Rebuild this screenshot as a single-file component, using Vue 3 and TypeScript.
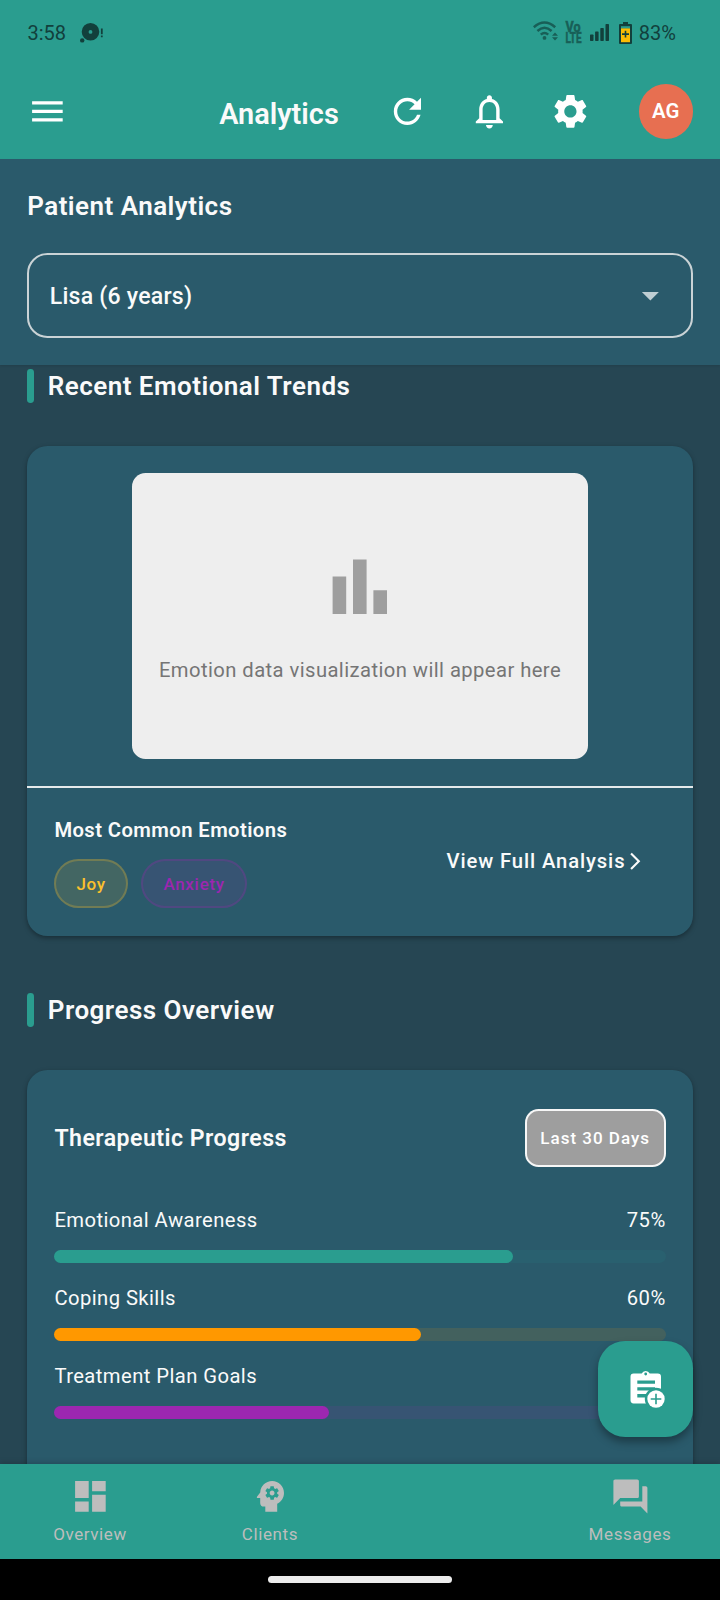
<script setup lang="ts">
interface Metric {
  label: string
  value: number
  shown: boolean
  tone: string
}

interface NavItem {
  label: string
  path: string
}

const metrics: Metric[] = [
  { label: 'Emotional Awareness', value: 75, shown: true, tone: 'teal' },
  { label: 'Coping Skills', value: 60, shown: true, tone: 'orange' },
  { label: 'Treatment Plan Goals', value: 45, shown: false, tone: 'purple' },
]

const navItems: (NavItem | null)[] = [
  {
    label: 'Overview',
    path: 'M3 13h8V3H3v10zm0 8h8v-6H3v6zm10 0h8V11h-8v10zm0-18v6h8V3h-8z',
  },
  {
    label: 'Clients',
    path: 'M13 8.57c-.79 0-1.43.64-1.43 1.43s.64 1.43 1.43 1.43 1.43-.64 1.43-1.43-.64-1.43-1.43-1.43zM13 3C9.25 3 6.2 5.94 6.02 9.64L4.1 12.2c-.25.33-.01.8.4.8H6v3c0 1.1.9 2 2 2h1v3h7v-4.68c2.36-1.12 4-3.53 4-6.32 0-3.87-3.13-7-7-7zm3 7c0 .13-.01.26-.02.39l.83.66c.08.06.1.16.05.25l-.8 1.39c-.05.09-.16.12-.24.09l-.99-.4c-.21.16-.43.29-.67.39L14 13.83c-.01.1-.1.17-.2.17h-1.6c-.1 0-.18-.07-.2-.17l-.15-1.06c-.25-.1-.47-.23-.68-.39l-.99.4c-.09.03-.2 0-.25-.09l-.8-1.39c-.05-.08-.03-.19.05-.25l.84-.66c-.01-.13-.02-.26-.02-.39s.02-.27.04-.39l-.85-.66c-.08-.06-.1-.16-.05-.26l.8-1.38c.05-.09.15-.12.24-.09l1 .4c.2-.15.43-.29.67-.39L12 6.17c.02-.1.1-.17.2-.17h1.6c.1 0 .18.07.2.17l.15 1.06c.24.1.46.23.67.39l1-.4c.09-.03.2 0 .24.09l.8 1.38c.05.09.03.2-.05.26l-.85.66c.03.12.04.25.04.39z',
  },
  null,
  {
    label: 'Messages',
    path: 'M21 6h-2v9H6v2c0 .55.45 1 1 1h11l4 4V7c0-.55-.45-1-1-1zm-4 6V3c0-.55-.45-1-1-1H3c-.55 0-1 .45-1 1v14l4-4h10c.55 0 1-.45 1-1z',
  },
]
</script>

<template>
  <div class="screen">
    <header class="top">
      <div class="status">
        <span class="clock">3:58</span>
        <svg class="chat-status" viewBox="0 0 24 20">
          <path
            fill-rule="evenodd"
            d="M10.5 0a8.8 8.8 0 1 1 0 17.6a8.8 8.8 0 0 1 0-17.6zm0 7a1.9 1.9 0 1 0 0 3.8a1.9 1.9 0 0 0 0-3.8z"
          />
          <circle cx="2.2" cy="17.4" r="2.2" />
          <path d="M20.9 5.4h1.8v5.8h-1.8zM20.9 12.4h1.8v1.8h-1.8z" />
        </svg>
        <svg class="wifi" viewBox="0 0 25 20">
          <g fill="none" stroke="currentColor" stroke-width="2.5">
            <path d="M.8 6.2Q11.5 -3.2 22.2 6.2" />
            <path d="M4.4 10Q11.5 3.6 18.6 10" />
            <path d="M7.8 13.6Q11.5 10.3 15.2 13.6" />
          </g>
          <circle cx="11.5" cy="16.9" r="1.9" />
          <path d="M22 11.5l3 3.3h-6zM22 19.5l3-3.3h-6z" />
        </svg>
        <svg class="volte" viewBox="0 0 17 24">
          <text x="0.5" y="10.8" font-size="13.8" textLength="15" lengthAdjust="spacingAndGlyphs">Vo</text>
          <text x="0.5" y="22" font-size="13.8" textLength="16" lengthAdjust="spacingAndGlyphs">LTE</text>
        </svg>
        <svg class="signal" viewBox="0 0 19 17">
          <rect x="0" y="10.6" width="3.5" height="6.4" rx=".7" />
          <rect x="5.1" y="7.4" width="3.5" height="9.6" rx=".7" />
          <rect x="10.3" y="4" width="3.5" height="13" rx=".7" />
          <rect x="15.5" y="0" width="3.5" height="17" rx=".7" />
        </svg>
        <svg class="battery" viewBox="0 0 13 22">
          <path d="M4 0h5v2h3q1 0 1 1v18q0 1-1 1H1q-1 0-1-1V3q0-1 1-1h3z" />
          <path fill="#2a9d8f" d="M2 4.2h9v2.4H2z" />
          <path fill="#fbbc04" d="M2 6.4h9v13.8H2z" />
          <path d="M5.7 8.8h1.6v2.5H10v1.6H7.3v2.5H5.7v-2.5H3v-1.6h2.7z" />
        </svg>
        <span class="percent">83%</span>
      </div>
      <div class="appbar">
        <svg class="icon menu" viewBox="0 0 24 24"><path d="M3 18h18v-2H3v2zm0-5h18v-2H3v2zm0-7v2h18V6H3z" /></svg>
        <h1>Analytics</h1>
        <svg class="icon" viewBox="0 0 24 24">
          <path
            d="M17.65 6.35C16.2 4.9 14.21 4 12 4c-4.42 0-7.99 3.58-7.99 8s3.57 8 7.99 8c3.73 0 6.84-2.55 7.73-6h-2.08c-.82 2.33-3.04 4-5.65 4-3.31 0-6-2.69-6-6s2.69-6 6-6c1.66 0 3.14.69 4.22 1.78L13 11h7V4l-2.35 2.35z"
          />
        </svg>
        <svg class="icon" viewBox="0 0 24 24">
          <path
            d="M12 22c1.1 0 2-.9 2-2h-4c0 1.1.89 2 2 2zm6-6v-5c0-3.07-1.64-5.64-4.5-6.32V4c0-.83-.67-1.5-1.5-1.5s-1.5.67-1.5 1.5v.68C7.63 5.36 6 7.92 6 11v5l-2 2v1h16v-1l-2-2zm-2 1H8v-6c0-2.48 1.51-4.5 4-4.5s4 2.02 4 4.5v6z"
          />
        </svg>
        <svg class="icon" viewBox="0 0 24 24">
          <path
            d="M19.14 12.94c.04-.3.06-.61.06-.94 0-.32-.02-.64-.07-.94l2.03-1.58c.18-.14.23-.41.12-.61l-1.92-3.32c-.12-.22-.37-.29-.59-.22l-2.39.96c-.5-.38-1.03-.7-1.62-.94l-.36-2.54c-.04-.24-.24-.41-.48-.41h-3.84c-.24 0-.43.17-.47.41l-.36 2.54c-.59.24-1.13.57-1.62.94l-2.39-.96c-.22-.08-.47 0-.59.22L2.74 8.87c-.12.21-.08.47.12.61l2.03 1.58c-.05.3-.09.63-.09.94s.02.64.07.94l-2.03 1.58c-.18.14-.23.41-.12.61l1.92 3.32c.12.22.37.29.59.22l2.39-.96c.5.38 1.03.7 1.62.94l.36 2.54c.05.24.24.41.48.41h3.84c.24 0 .44-.17.47-.41l.36-2.54c.59-.24 1.13-.56 1.62-.94l2.39.96c.22.08.47 0 .59-.22l1.92-3.32c.12-.22.07-.47-.12-.61l-2.01-1.58zM12 15.6c-1.98 0-3.6-1.62-3.6-3.6s1.62-3.6 3.6-3.6 3.6 1.62 3.6 3.6-1.62 3.6-3.6 3.6z"
          />
        </svg>
        <div class="avatar">AG</div>
      </div>
    </header>

    <section class="patient">
      <h2>Patient Analytics</h2>
      <div class="select">
        <span>Lisa (6 years)</span>
        <svg class="icon" viewBox="0 0 24 24"><path d="M7 10l5 5 5-5z" /></svg>
      </div>
    </section>

    <main class="content">
      <div class="heading first"><i class="accent"></i><h2>Recent Emotional Trends</h2></div>
      <section class="card trends">
        <div class="placeholder">
          <svg viewBox="0 0 24 24"><path d="M4 9h4v11H4zm12 4h4v7h-4zm-6-9h4v16h-4z" /></svg>
          <p>Emotion data visualization will appear here</p>
        </div>
        <div class="summary">
          <div>
            <h3>Most Common Emotions</h3>
            <div class="chips">
              <span class="chip joy">Joy</span>
              <span class="chip anxiety">Anxiety</span>
            </div>
          </div>
          <div class="link">
            <span>View Full Analysis</span>
            <svg viewBox="0 0 24 24"><path d="M6.23 20.23L8 22l10-10L8 2 6.23 3.77 14.46 12z" /></svg>
          </div>
        </div>
      </section>

      <div class="heading second"><i class="accent"></i><h2>Progress Overview</h2></div>
      <section class="card progress">
        <div class="card-head">
          <h3>Therapeutic Progress</h3>
          <span class="range">Last 30 Days</span>
        </div>
        <div v-for="m in metrics" :key="m.label" class="metric" :class="m.tone">
          <div class="metric-row">
            <span>{{ m.label }}</span>
            <span v-if="m.shown">{{ m.value }}%</span>
          </div>
          <div class="track"><div class="fill" :style="{ width: m.value + '%' }"></div></div>
        </div>
      </section>
    </main>

    <div class="fab">
      <svg viewBox="0 0 36 40">
        <path
          fill="#fff"
          fill-rule="evenodd"
          d="M3.6 3.6h8.1a4.4 4.4 0 0 1 8 0h8.1q3.2 0 3.2 3.2v26.6H3.6q-3.1 0-3.1-3.1V6.7q0-3.1 3.1-3.1zM15.7 2.6a1.4 1.4 0 1 0 0 2.8a1.4 1.4 0 0 0 0-2.8zM7.3 10.4v3.4H25v-3.4zM7.3 17.3v3.3H25v-3.3zM7.3 24.1v3.4H19v-3.4z"
        />
        <circle cx="26" cy="29" r="11.2" fill="#2a9d8f" />
        <circle cx="26" cy="29" r="8.7" fill="#fff" />
        <path stroke="#2a9d8f" stroke-width="1.6" d="M26 23.7v10.6M20.7 29h10.6" />
      </svg>
    </div>

    <nav class="tabs">
      <div v-for="(item, i) in navItems" :key="i" class="tab">
        <template v-if="item">
          <svg viewBox="0 0 24 24"><path :d="item.path" /></svg>
          <span>{{ item.label }}</span>
        </template>
      </div>
    </nav>
    <div class="gesture"><div class="pill"></div></div>
  </div>
</template>

<style>
html,
body {
  margin: 0;
  background: #264653;
}
</style>

<style scoped>
.screen {
  position: relative;
  display: flex;
  flex-direction: column;
  width: 720px;
  height: 1600px;
  overflow: hidden;
  background: #264653;
  color: #fafafa;
  font-family: Roboto, 'Liberation Sans', sans-serif;
}
h1,
h2,
h3,
p {
  margin: 0;
  font-weight: 600;
  white-space: nowrap;
}
svg {
  display: block;
  flex: none;
  fill: currentColor;
}
.top {
  flex: none;
  height: 159px;
  background: #2a9d8f;
}
.status {
  display: flex;
  height: 64px;
  box-sizing: border-box;
  padding: 2px 44px 0 27.4px;
  align-items: center;
  color: #12403c;
  font-size: 20px;
}
.chat-status {
  width: 24px;
  height: 20px;
  margin: -1px auto 0 14.4px;
}
.wifi {
  width: 25px;
  height: 20px;
  margin: -4px 7px 0 0;
  color: #185f57;
}
.volte {
  width: 17px;
  height: 24px;
  margin-right: 8px;
  overflow: visible;
  color: #185f57;
  font-weight: 700;
  stroke: currentColor;
  stroke-width: 0.5px;
}
.signal {
  width: 19px;
  height: 17px;
  margin: -2px 10px 0 0;
}
.battery {
  width: 13px;
  height: 22px;
  margin: -1px 7px 0 0;
}
.appbar {
  display: flex;
  height: 95px;
  box-sizing: border-box;
  padding: 0 27.1px 0 27.4px;
  align-items: center;
  color: #fff;
}
.icon {
  width: 40.8px;
  height: 40.8px;
}
.appbar .icon + .icon {
  margin-left: 40.8px;
}
.appbar h1 {
  width: 168px;
  margin: 4px 0 0 151px;
  font-size: 28.9px;
  color: #fafafa;
}
.avatar {
  display: flex;
  width: 54.4px;
  height: 54.4px;
  margin-left: auto;
  border-radius: 50%;
  align-items: center;
  justify-content: center;
  background: #e76f51;
  font-size: 20.4px;
  font-weight: 600;
}
.patient {
  flex: none;
  height: 206px;
  box-sizing: border-box;
  padding: 27px 27.2px 0;
  background: #2a5a6b;
  box-shadow: 0 1px 2px rgba(0, 0, 0, 0.1);
  z-index: 1;
}
h2 {
  font-size: 26px;
  line-height: 40px;
  letter-spacing: 0.47px;
}
.select {
  display: flex;
  height: 85px;
  box-sizing: border-box;
  margin-top: 27px;
  padding: 0 20px 0 20.6px;
  border: 2px solid rgba(238, 238, 238, 0.82);
  border-radius: 20.4px;
  align-items: center;
  justify-content: space-between;
  font-size: 23.1px;
  font-weight: 500;
  letter-spacing: 0.22px;
}
.select span {
  padding-top: 2px;
}
.select .icon {
  color: rgba(255, 255, 255, 0.7);
}
.content {
  flex: 1;
  min-height: 0;
  padding: 0 27.2px;
}
.heading {
  display: flex;
  height: 34px;
  align-items: center;
  gap: 13.8px;
}
.heading.first {
  margin-top: 3.5px;
}
.heading.second {
  margin-top: 57px;
}
.accent {
  width: 6.8px;
  height: 34px;
  border-radius: 3.4px;
  background: #2a9d8f;
}
.card {
  margin-top: 43.6px;
  border-radius: 20.4px;
  background: #2a5a6b;
  box-shadow: 0 2px 5px rgba(0, 0, 0, 0.35);
}
.trends {
  height: 489.5px;
  box-sizing: border-box;
  padding-top: 27.2px;
}
.placeholder {
  display: flex;
  width: 456.6px;
  height: 285.6px;
  box-sizing: border-box;
  margin: 0 auto;
  padding-top: 73px;
  border-radius: 13.6px;
  flex-direction: column;
  align-items: center;
  background: #eee;
}
.placeholder svg {
  width: 81.6px;
  height: 81.6px;
  color: #9e9e9e;
}
.placeholder p {
  margin-top: 27.6px;
  color: #757575;
  font-size: 20.23px;
  font-weight: 400;
  line-height: 30px;
  letter-spacing: 0.425px;
}
.summary {
  display: flex;
  margin-top: 27px;
  padding: 27px 47px 0 27.2px;
  border-top: 2px solid rgba(250, 250, 250, 0.9);
  align-items: center;
  justify-content: space-between;
}
.summary h3 {
  font-size: 20.23px;
  line-height: 30px;
  letter-spacing: 0.42px;
}
.chips {
  display: flex;
  gap: 13.6px;
  margin-top: 14px;
}
.chip {
  height: 49px;
  box-sizing: border-box;
  padding: 0 20px;
  border: 2px solid;
  border-radius: 25px;
  font-size: 17px;
  font-weight: 500;
  line-height: 47px;
  letter-spacing: 0.7px;
}
.joy {
  border-color: rgba(251, 192, 45, 0.25);
  background: rgba(251, 192, 45, 0.12);
  color: #fbc02d;
}
.anxiety {
  border-color: rgba(156, 39, 176, 0.25);
  background: rgba(156, 39, 176, 0.12);
  color: #9c27b0;
}
.link {
  display: flex;
  align-items: center;
  font-size: 20.23px;
  font-weight: 500;
  letter-spacing: 0.88px;
}
.link svg {
  width: 20.4px;
  height: 20.4px;
}
.progress {
  height: 500px;
  box-sizing: border-box;
  padding: 39px 27.2px 0;
}
.card-head {
  display: flex;
  height: 58px;
  align-items: center;
  justify-content: space-between;
}
.card-head h3 {
  padding-top: 1px;
  font-size: 23.12px;
  letter-spacing: 0.47px;
}
.range {
  height: 58px;
  width: 140.8px;
  box-sizing: border-box;
  border: 2px solid rgba(255, 255, 255, 0.92);
  border-radius: 13.6px;
  background: #9e9e9e;
  color: #fff;
  font-size: 17px;
  font-weight: 500;
  line-height: 55px;
  letter-spacing: 1px;
  text-align: center;
}
.metric {
  height: 78px;
}
.card-head + .metric {
  margin-top: 39px;
}
.metric-row {
  display: flex;
  height: 29px;
  justify-content: space-between;
  font-size: 20.23px;
  line-height: 29.6px;
  letter-spacing: 0.43px;
}
.track {
  height: 13.6px;
  margin-top: 14.5px;
  border-radius: 6.8px;
}
.fill {
  height: 100%;
  border-radius: 6.8px;
}
.teal .track {
  background: rgba(42, 157, 143, 0.1);
}
.teal .fill {
  background: #2a9d8f;
}
.orange .track {
  background: rgba(255, 152, 0, 0.12);
}
.orange .fill {
  background: #ff9800;
}
.purple .track {
  background: rgba(156, 39, 176, 0.12);
}
.purple .fill {
  background: #9c27b0;
}
.fab {
  position: absolute;
  right: 27.2px;
  bottom: 163.5px;
  display: flex;
  width: 95.2px;
  height: 95.2px;
  border-radius: 27.2px;
  background: #2a9d8f;
  box-shadow: 0 5px 9px rgba(0, 0, 0, 0.35);
}
.fab svg {
  width: 36px;
  height: 40px;
  margin: 28.4px 0 0 32.4px;
}
.tabs {
  position: relative;
  display: grid;
  flex: none;
  height: 95px;
  grid-template-columns: repeat(4, 1fr);
  background: #2a9d8f;
  color: #bdbdbd;
  box-shadow: 0 -1px 6px rgba(0, 0, 0, 0.18);
}
.tab {
  display: flex;
  padding-top: 12.3px;
  flex-direction: column;
  align-items: center;
}
.tab svg {
  width: 40.8px;
  height: 40.8px;
}
.tab span {
  margin-top: 4.7px;
  font-size: 17px;
  line-height: 24px;
  letter-spacing: 0.6px;
}
.gesture {
  position: relative;
  flex: none;
  height: 41px;
  padding-top: 17px;
  box-sizing: border-box;
  background: #000;
}
.pill {
  width: 184px;
  height: 7px;
  margin: 0 auto;
  border-radius: 3.5px;
  background: #ececec;
}
</style>
